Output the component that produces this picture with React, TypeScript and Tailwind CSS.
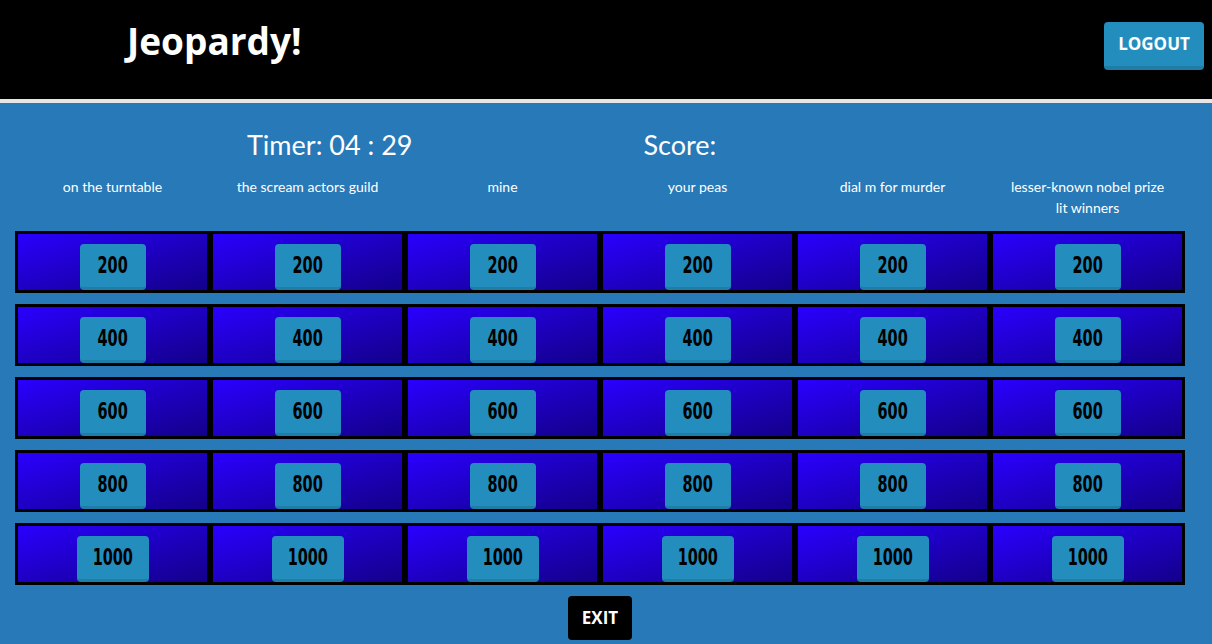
import React from "react";

const categories = [
  "on the turntable",
  "the scream actors guild",
  "mine",
  "your peas",
  "dial m for murder",
  "lesser-known nobel prize lit winners",
];

const values = [200, 400, 600, 800, 1000];

const sans = "font-['Lato','Open_Sans',sans-serif]";

function Cell({ value }: { value: number }) {
  return (
    <div className="h-[62px] border-[3px] border-black bg-gradient-to-br from-[#2a00ff] to-[#13008a] flex justify-center items-end pt-[10px]">
      <button
        className={`h-[46px] ${value >= 1000 ? "w-[72px]" : "w-[66px]"} rounded-[4px] bg-[#238ebe] border-b-[3px] border-[#1f7ea8] flex items-center justify-center`}
      >
        <span className="inline-block scale-x-[0.7] font-['DejaVu_Sans_Condensed','DejaVu_Sans',sans-serif] font-bold text-[23px] leading-none text-black">
          {value}
        </span>
      </button>
    </div>
  );
}

export default function App() {
  return (
    <div className={`min-h-screen bg-[#2779b8] ${sans}`}>
      {/* Header */}
      <header className="h-[103px] bg-black border-b-4 border-[#e6e6e6] flex items-start justify-between">
        <h1 className="ml-[127px] mt-[17px] text-white font-['Open_Sans',sans-serif] font-bold text-[37px] leading-[48px]">
          Jeopardy!
        </h1>
        <button className="mt-[22px] mr-[8px] w-[100px] h-[48px] rounded-[4px] bg-[#238ebe] border-b-4 border-[#1f7ea8] text-white font-['Open_Sans',sans-serif] font-bold text-[17px]">
          LOGOUT
        </button>
      </header>

      {/* Board */}
      <main className="w-[1170px] ml-[15px] pt-[25px] pb-1">
        <div className="h-[34px] flex items-center pl-[232px] gap-[231px] text-white text-[27px] leading-[34px]">
          <span>Timer: 04 : 29</span>
          <span>Score:</span>
        </div>

        <div className="mt-[14px] h-[55px] grid grid-cols-6">
          {categories.map((c) => (
            <div key={c} className="px-[18px] text-center text-white text-[14px] leading-[21px]">
              {c}
            </div>
          ))}
        </div>

        <div className="flex flex-col gap-[11px]">
          {values.map((v) => (
            <div key={v} className="grid grid-cols-6">
              {categories.map((c) => (
                <Cell key={c + v} value={v} />
              ))}
            </div>
          ))}
        </div>

        <div className="mt-[11px] flex justify-center">
          <button className="w-[64px] h-[44px] rounded-[4px] bg-black text-white font-['Open_Sans',sans-serif] font-bold text-[17px]">
            EXIT
          </button>
        </div>
      </main>
    </div>
  );
}
